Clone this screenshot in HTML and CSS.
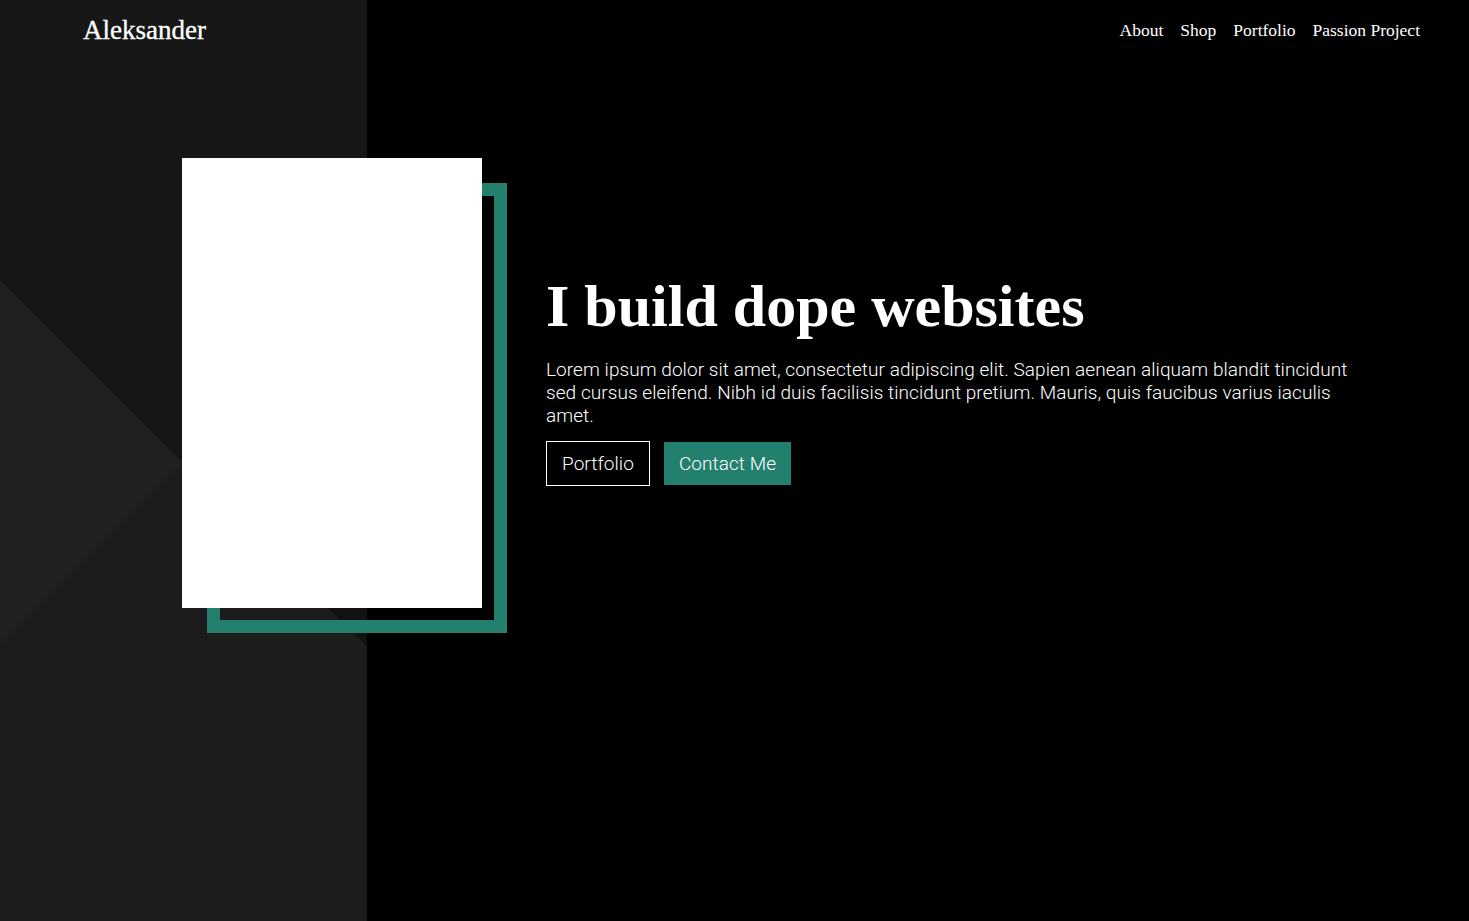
FILE: index.html
```html
<!DOCTYPE html>
<html lang="en">
<head>
<meta charset="utf-8">
<title>Aleksander</title>
<link rel="stylesheet" href="styles.css">
</head>
<body>
<div class="page">
  <aside class="side">
    <svg class="side-art" viewBox="0 0 367 921" preserveAspectRatio="none" aria-hidden="true">
      <defs>
        <linearGradient id="upper" x1="0" y1="0" x2="0" y2="647" gradientUnits="userSpaceOnUse">
          <stop offset="0" stop-color="#171717"/>
          <stop offset="0.75" stop-color="#161616"/>
          <stop offset="1" stop-color="#111111"/>
        </linearGradient>
      </defs>
      <rect x="0" y="0" width="367" height="921" fill="#1c1c1c"/>
      <polygon points="0,0 367,0 367,647 0,280" fill="url(#upper)"/>
      <polygon points="0,280 182,462 0,644" fill="#202020"/>
    </svg>
  </aside>

  <header class="topbar">
    <a class="logo" href="#">Aleksander</a>
    <nav class="nav">
      <a href="#">About</a>
      <a href="#">Shop</a>
      <a href="#">Portfolio</a>
      <a href="#">Passion Project</a>
    </nav>
  </header>

  <main class="hero">
    <div class="photo-wrap">
      <div class="photo-frame"></div>
      <div class="photo"></div>
    </div>
    <div class="intro">
      <h1 class="title">I build dope websites</h1>
      <p class="lead">Lorem ipsum dolor sit amet, consectetur adipiscing elit. Sapien aenean aliquam blandit tincidunt sed cursus eleifend. Nibh id duis facilisis tincidunt pretium. Mauris, quis faucibus varius iaculis amet.</p>
      <div class="actions">
        <a class="btn btn-outline" href="#">Portfolio</a>
        <a class="btn btn-solid" href="#">Contact Me</a>
      </div>
    </div>
  </main>
</div>
</body>
</html>
```

FILE: styles.css
```css
* {
  box-sizing: border-box;
}

html, body {
  margin: 0;
  padding: 0;
  background: #000;
  color: #fff;
}

body {
  font-family: "Roboto", "Liberation Sans", sans-serif;
  overflow: hidden;
}

a {
  color: inherit;
  text-decoration: none;
}

.page {
  display: grid;
  grid-template-columns: 25% 1fr;
  grid-template-rows: 62px 1fr;
  height: 100vh;
}

.side {
  grid-column: 1;
  grid-row: 1 / 3;
  position: relative;
  background: #1c1c1c;
}

.side-art {
  position: absolute;
  inset: 0;
  width: 100%;
  height: 100%;
  display: block;
}

.topbar {
  grid-column: 1 / 3;
  grid-row: 1;
  position: relative;
  display: flex;
  justify-content: space-between;
  align-items: flex-start;
  padding: 0 49px 0 83px;
}

.logo {
  font-family: "Liberation Serif", "DejaVu Serif", serif;
  font-size: 27px;
  line-height: 1;
  margin-top: 17px;
  color: #fff;
  -webkit-text-stroke: 0.3px #fff;
}

.nav {
  display: flex;
  gap: 17px;
  margin-top: 22px;
}

.nav a {
  font-family: "Liberation Serif", "DejaVu Serif", serif;
  font-size: 17.5px;
  line-height: 1;
  color: #fff;
}

.hero {
  grid-column: 1 / 3;
  grid-row: 2;
  position: relative;
  display: flex;
  align-items: flex-start;
  padding: 96px 0 0 182px;
}

.photo-wrap {
  display: grid;
  flex-shrink: 0;
}

.photo-frame,
.photo {
  grid-area: 1 / 1;
  width: 300px;
  height: 450px;
}

.photo-frame {
  margin: 25px 0 0 25px;
  border: 13px solid #237f6e;
}

.photo {
  background: #fff;
}

.intro {
  margin: 112px 0 0 39px;
  max-width: 814px;
}

.title {
  margin: 0;
  font-family: "Liberation Serif", "DejaVu Serif", serif;
  font-weight: 700;
  font-size: 60px;
  line-height: 72px;
  color: #fff;
}

.lead {
  margin: 16px 0 0;
  font-family: "Roboto", sans-serif;
  font-weight: 300;
  font-size: 19px;
  line-height: 23px;
  letter-spacing: 0.06px;
  color: #fff;
}

.actions {
  display: flex;
  align-items: center;
  gap: 14px;
  margin-top: 14px;
}

.btn {
  display: inline-flex;
  align-items: center;
  justify-content: center;
  font-family: "Roboto", sans-serif;
  font-weight: 300;
  font-size: 19px;
  letter-spacing: 0.06px;
  color: #fff;
  padding: 0 15px;
}

.btn-outline {
  height: 45px;
  border: 1px solid #fff;
}

.btn-solid {
  height: 43px;
  background: #237f6e;
}
```
